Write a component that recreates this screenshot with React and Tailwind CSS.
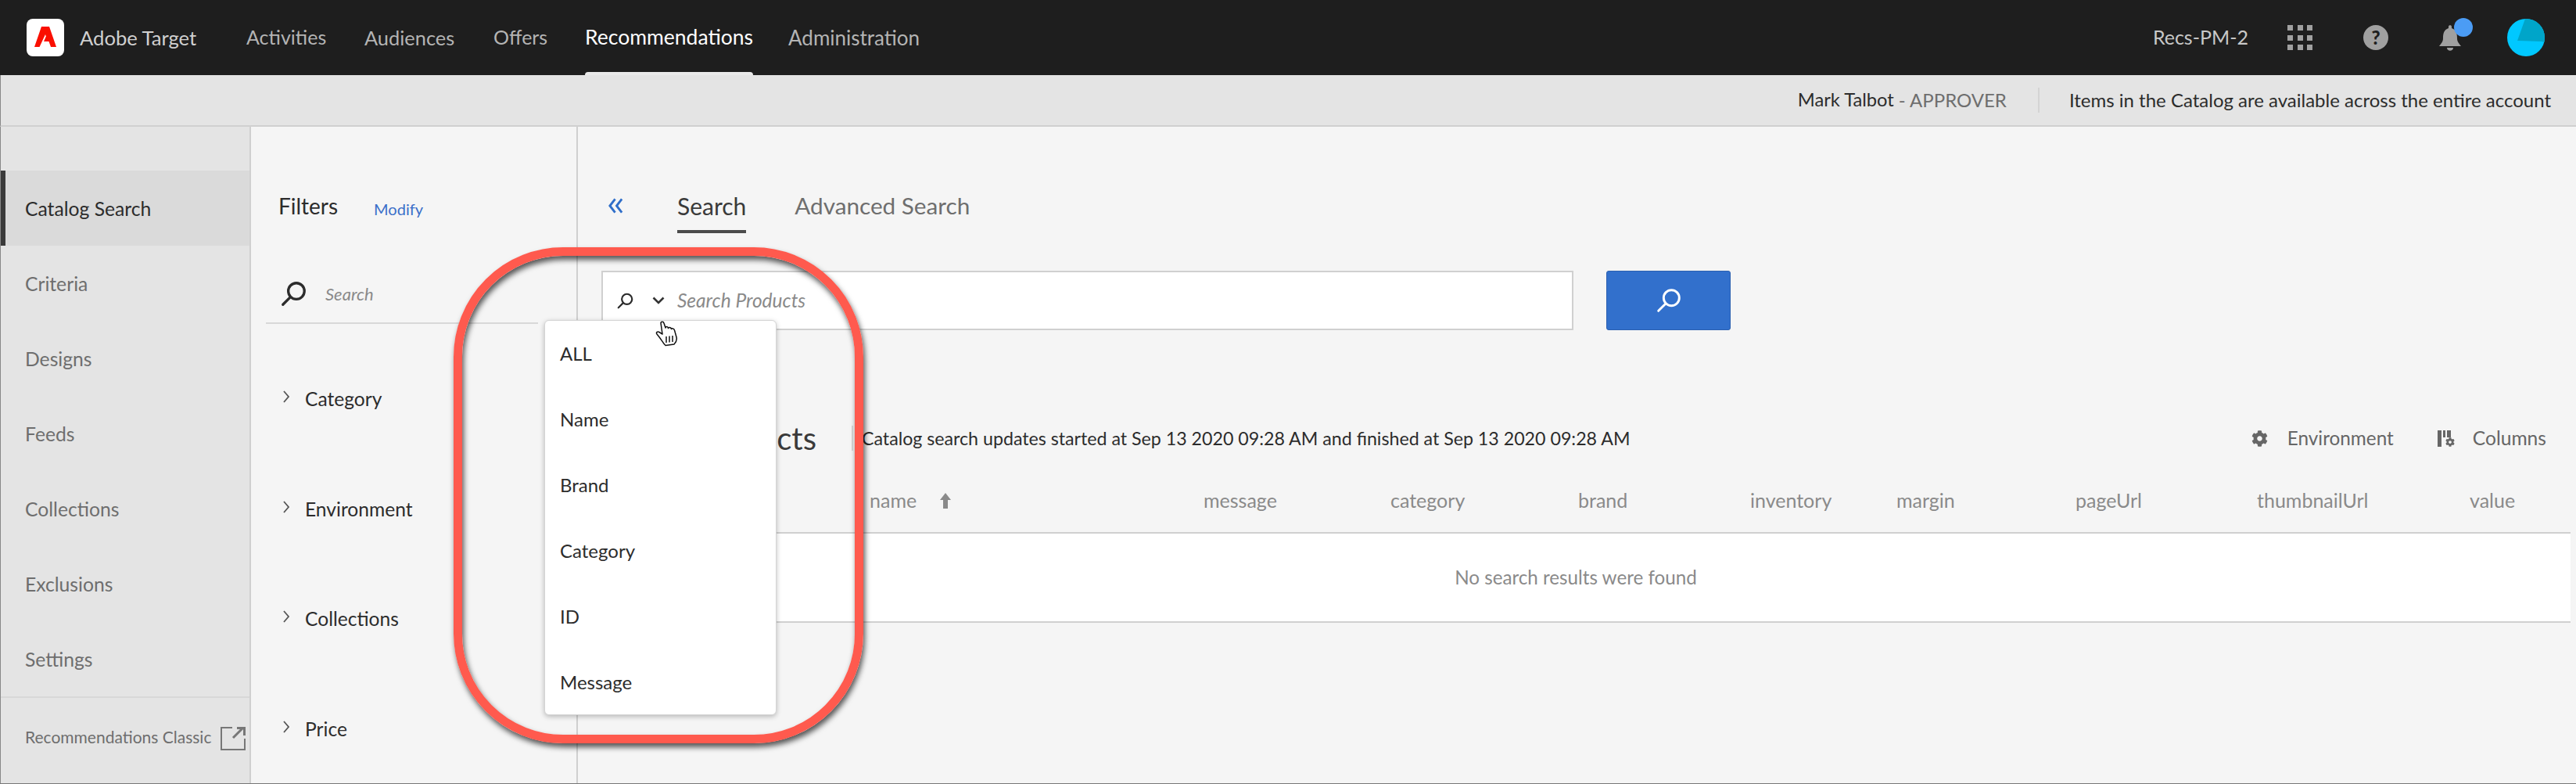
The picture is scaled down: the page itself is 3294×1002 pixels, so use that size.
import { FaCog } from "react-icons/fa";

const navItems = [
  { label: "Activities", className: "w-[151px] text-[25px]" },
  { label: "Audiences", className: "w-[165px] text-[25.4px]" },
  { label: "Offers", className: "w-[117px] text-[25px]" },
  { label: "Recommendations", className: "w-[260px] text-[26.5px] text-white", active: true },
  { label: "Administration", className: "w-[200px] text-[26px]" },
];

const sideItems = ["Catalog Search", "Criteria", "Designs", "Feeds", "Collections", "Exclusions", "Settings"];
const filterItems = ["Category", "Environment", "Collections", "Price"];
const menuItems = ["ALL", "Name", "Brand", "Category", "ID", "Message"];

const columns = [
  { label: "message", className: "w-[239px]" },
  { label: "category", className: "w-[240px]" },
  { label: "brand", className: "w-[220px]" },
  { label: "inventory", className: "w-[187px]" },
  { label: "margin", className: "w-[229px]" },
  { label: "pageUrl", className: "w-[232px]" },
  { label: "thumbnailUrl", className: "w-[272px]" },
  { label: "value", className: "w-[100px]" },
];

const SearchIcon = ({ className, color = "#2c2c2c", width = 3 }) => (
  <svg viewBox="0 0 24 24" className={className} fill="none" stroke={color} strokeWidth={width}>
    <circle cx="14.5" cy="9.5" r="7.5" />
    <path d="M9 15 L2 22" strokeLinecap="round" />
  </svg>
);

const Chevron = ({ className }) => (
  <svg viewBox="0 0 10 18" className={className} fill="none" stroke="#555" strokeWidth="1.8">
    <path d="M2 2 L8 9 L2 16" />
  </svg>
);

const AdobeLogo = () => (
  <div className="w-[48px] h-[48px] bg-white rounded-lg shrink-0">
    <svg viewBox="0 0 48 48" className="w-full h-full">
      <path fill="#fa0f00" d="M19 10 H29 L38 36 H31 L28.5 29 H22 L24.8 22.5 L24 20 L16.5 36 H10 Z" />
    </svg>
  </div>
);

const BellIcon = () => (
  <svg viewBox="0 0 30 34" className="w-[30px] h-[34px]">
    <path
      fill="#a0a0a0"
      d="M13 3 C13 0.5 17 0.5 17 3 V5 C23 7 24 12 24 18 C24 23 27 25 29 28 H1 C3 25 6 23 6 18 C6 12 7 7 13 5 Z"
    />
    <path fill="#a0a0a0" d="M11 30 H19 C19 35 11 35 11 30 Z" />
  </svg>
);

const Avatar = () => (
  <svg viewBox="0 0 48 48" className="w-[48px] h-[48px]">
    <clipPath id="avatar-clip">
      <circle cx="24" cy="24" r="24" />
    </clipPath>
    <g clipPath="url(#avatar-clip)">
      <rect width="48" height="48" fill="#00c8ff" />
      <path fill="#00a5c9" d="M23 0 H48 V30 L43.5 29 L13 28 Z" />
    </g>
  </svg>
);

const HandCursor = () => (
  <svg viewBox="0 0 30 33" className="w-[30px] h-[33px]">
    <path
      fill="#fff"
      stroke="#111"
      strokeWidth="1.5"
      strokeLinejoin="round"
      d="M7 3 C7 0.5 10.5 0.5 11 3 L13 9 C13 7 16 7 16.5 9.5 C17 8 20 8 20.5 10.5 C21 9.5 24 9.5 24.5 12 L27 21 C28 25 26 28 24 30 L13 31.5 C10 29 8 24 2 17 C0.5 15 3 13 5 14.5 L9 17 Z"
    />
    <path stroke="#111" strokeWidth="1.5" d="M14 20 V28 M18 19.5 V27.5 M22 19 V27" />
  </svg>
);

const ExternalIcon = () => (
  <svg viewBox="0 0 32 30" className="w-[32px] h-[30px]" fill="none" stroke="#777" strokeWidth="2">
    <path d="M15 1 H1 V29 H31 V15" />
    <path d="M16 14 L28 2 M21 1.5 H30.5 V11" strokeWidth="3" />
  </svg>
);

const ColumnsIcon = () => (
  <div className="flex w-[23px] h-[21px] gap-[2px] shrink-0">
    <div className="w-[5px] h-full bg-[#666]" />
    <div className="w-[3px] h-[9px] bg-[#666]" />
    <div className="w-[5px] h-[9px] bg-[#666]" />
    <FaCog className="w-[12px] h-[12px] text-[#666] -ml-[9px] mt-[9px] shrink-0" />
  </div>
);

export default function App() {
  return (
    <div className="relative w-[3294px] h-[1002px] overflow-hidden bg-[#f5f5f5] font-['Lato',sans-serif] text-[24px] border-b border-[#777]">
      {/* top nav */}
      <header className="h-[96px] bg-[#1e1e1e] flex items-center pl-[34px] text-[#b4b4b4]">
        <AdobeLogo />
        <span className="ml-[20px] w-[213px] text-[25.6px] text-[#d0d0d0]">Adobe Target</span>
        {navItems.map((item) => (
          <div key={item.label} className={`h-full shrink-0 ${item.className}`}>
            <div className="relative inline-flex h-full items-center">
              {item.label}
              {item.active && <div className="absolute left-0 right-0 bottom-0 h-[4px] bg-[#eaeaea] rounded-t-sm" />}
            </div>
          </div>
        ))}
        <span className="ml-auto text-[25px] text-[#c8c8c8]">Recs-PM-2</span>
        <div className="ml-[50px] grid grid-cols-[7px_7px_7px] gap-x-[5.5px] gap-y-[5.5px] w-[32px]">
          {Array.from({ length: 9 }).map((_, i) => (
            <div key={i} className="w-[7px] h-[7px] bg-[#a0a0a0]" />
          ))}
        </div>
        <div className="ml-[65px] w-[32px] h-[32px] rounded-full bg-[#a0a0a0] flex items-center justify-center text-[#1e1e1e] font-black text-[24px]">
          ?
        </div>
        <div className="relative ml-[64px]">
          <BellIcon />
          <div className="absolute left-[20px] -top-[8px] w-[24px] h-[24px] rounded-full bg-[#4b9cf5]" />
        </div>
        <div className="ml-[58px] mr-[40px]">
          <Avatar />
        </div>
      </header>

      {/* sub header */}
      <div className="h-[66px] bg-[#e4e4e4] border-b-2 border-[#d0d0d0] border-l border-l-[#888] flex items-center justify-end pr-[32px] text-[#2c2c2c]">
        <span className="text-[23.7px]">Mark Talbot</span>
        <span className="ml-[6px] text-[#6e6e6e]">- APPROVER</span>
        <div className="w-[2px] h-[32px] bg-[#d4d4d4] ml-[40px] mr-[38px]" />
        <span>Items in the Catalog are available across the entire account</span>
      </div>

      <div className="flex h-[839px] border-l border-[#888]">
        {/* left nav */}
        <aside className="w-[320px] shrink-0 bg-[#e4e4e4] border-r-2 border-[#d0d0d0] pt-[56px] flex flex-col text-[24.7px] text-[#6e6e6e]">
          {sideItems.map((item, i) => (
            <div
              key={item}
              className={
                i === 0
                  ? "h-[96px] flex items-center pl-[25px] pt-[2px] bg-[#dadada] border-l-[6px] border-[#3a3a3a] text-[#2c2c2c]"
                  : "h-[96px] flex items-center pl-[31px] pt-[2px]"
              }
            >
              {item}
            </div>
          ))}
          <div className="mt-auto h-[111px] border-t-2 border-[#d8d8d8] flex items-center pl-[31px] pb-[10px] text-[21px]">
            <span>Recommendations Classic</span>
            <div className="ml-[12px] mt-[4px]">
              <ExternalIcon />
            </div>
          </div>
        </aside>

        {/* filters */}
        <section className="w-[418px] shrink-0 border-r-2 border-[#d0d0d0] pt-[66px] text-[#2c2c2c]">
          <div className="h-[70px] flex items-center pl-[35px]">
            <span className="text-[28px]">Filters</span>
            <span className="ml-[46px] mt-[8px] text-[#3b6fc9] text-[20px]">Modify</span>
          </div>
          <div className="ml-[19px] mr-[49px] mt-[40px] h-[76px] border-b-2 border-[#d8d8d8] flex items-center pl-[19px]">
            <SearchIcon className="w-[33px] h-[33px]" width={2.4} />
            <span className="ml-[24px] text-[22px] italic text-[#8a8a8a]">Search</span>
          </div>
          <div className="mt-[82px] flex flex-col pl-[40px] text-[24.6px]">
            {filterItems.map((item) => (
              <div key={item} className="h-[140.5px] flex items-start gap-[19px]">
                <Chevron className="w-[10px] h-[18px] mt-[2px]" />
                <span className="-mt-[4px]">{item}</span>
              </div>
            ))}
          </div>
        </section>

        {/* main */}
        <main className="flex-1 pt-[66px] pl-[30px] pr-[7px] text-[#2c2c2c]">
          <div className="h-[70px] flex items-center">
            <svg viewBox="0 0 22 20" className="ml-[8px] w-[21px] h-[20px]" fill="none" stroke="#2f6ec9" strokeWidth="3">
              <path d="M10 1 L3 10 L10 19 M19 1 L12 10 L19 19" />
            </svg>
            <div className="ml-[68px] h-full flex items-center border-b-4 border-[#4b4b4b] pt-1 text-[30px] text-[#3a3a3a]">
              Search
            </div>
            <div className="ml-[62px] text-[29.7px] text-[#6e6e6e]">Advanced Search</div>
          </div>

          <div className="mt-[48px] flex">
            <div className="w-[1243px] h-[76px] bg-white border-2 border-[#d0d0d0] flex items-center pl-[18px]">
              <SearchIcon className="w-[21px] h-[21px]" width={2.5} />
              <svg viewBox="0 0 16 10" className="ml-[24px] w-[16px] h-[10px]" fill="none" stroke="#333" strokeWidth="2.6">
                <path d="M1.5 1.5 L8 8 L14.5 1.5" />
              </svg>
              <span className="ml-[16px] text-[24.5px] italic text-[#8a8a8a]">Search Products</span>
            </div>
            <div className="ml-[42px] w-[159px] h-[76px] bg-[#3270cc] border border-[#2a5fb0] rounded-[3px] flex items-center justify-center">
              <SearchIcon className="w-[32px] h-[32px]" color="#fff" width={2.2} />
            </div>
          </div>

          <div className="mt-[108px] pr-[31px] h-[60px] flex items-center">
            <div className="w-[275px] text-right text-[40px] leading-none text-[#3a3a3a]">Products</div>
            <div className="ml-[45px] w-[2px] h-[32px] bg-[#d8d8d8]" />
            <div className="ml-[11px] text-[23.2px]">
              Catalog search updates started at Sep 13 2020 09:28 AM and finished at Sep 13 2020 09:28 AM
            </div>
            <FaCog className="ml-auto w-[21px] h-[21px] text-[#666]" />
            <span className="ml-[25px] text-[#666] text-[24.3px]">Environment</span>
            <div className="ml-[56px]">
              <ColumnsIcon />
            </div>
            <span className="ml-[22px] text-[#666] text-[24.6px]">Columns</span>
          </div>

          <div className="mt-[10px] h-[82px] flex items-center pl-[343px] border-b-2 border-[#d0d0d0] text-[25px] text-[#8a8a8a]">
            <div className="w-[427px] flex items-center">
              <span>name</span>
              <svg viewBox="0 0 16 20" className="ml-[29px] w-[16px] h-[20px]" fill="#8a8a8a">
                <path d="M8 0 L15 9 H11 V20 H5 V9 H1 Z" />
              </svg>
            </div>
            {columns.map((col) => (
              <div key={col.label} className={col.className}>
                {col.label}
              </div>
            ))}
          </div>
          <div className="h-[114px] bg-white border-b-2 border-[#d0d0d0] flex items-center justify-center pr-[26px] text-[#8a8a8a] text-[24.2px]">
            No search results were found
          </div>
        </main>
      </div>

      {/* search type dropdown */}
      <div className="absolute left-[696px] top-[409px] w-[297px] h-[505px] bg-white rounded-md border border-[#d4d4d4] shadow-[0_2px_6px_rgba(0,0,0,0.25)] pl-[19px] text-[#2c2c2c]">
        {menuItems.map((item) => (
          <div key={item} className="h-[84px] flex items-center">
            {item}
          </div>
        ))}
      </div>

      <div className="absolute left-[838px] top-[410px]">
        <HandCursor />
      </div>

      {/* red callout */}
      <div className="absolute left-[580px] top-[316px] w-[524px] h-[634px] rounded-[140px] border-[11px] border-[#ff5a4e] shadow-[2px_5px_7px_rgba(0,0,0,0.65),inset_2px_5px_7px_rgba(0,0,0,0.65)]" />
    </div>
  );
}
